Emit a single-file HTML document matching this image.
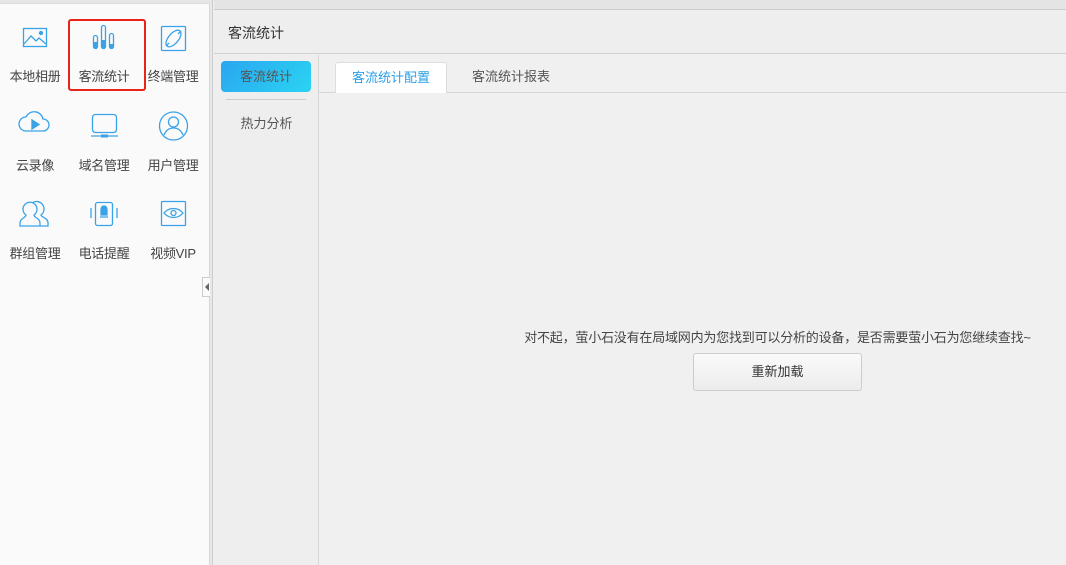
<!DOCTYPE html>
<html><head><meta charset="utf-8"><style>
*{margin:0;padding:0;box-sizing:border-box}
body{width:1066px;height:565px;overflow:hidden;background:#f0f0f0;font-family:"Liberation Sans","Noto Sans CJK SC",sans-serif;font-size:13px;color:#333;position:relative}
.abs{position:absolute}
.left{left:0;top:0;width:210px;height:565px;background:#fafafa;border-right:1px solid #d8d8d8}
.lbl{position:absolute;width:70px;text-align:center;color:#444;letter-spacing:-0.3px}
</style></head><body>
<div class="abs left"></div>
<div class="abs" style="left:0;top:0;width:210px;height:4px;background:#e6e6e6;border-bottom:1px solid #ddd"></div>
<div class="abs" style="left:210px;top:0;width:3px;height:565px;background:#e8e8e8;border-right:1px solid #ccc"></div>
<div class="abs" style="left:202px;top:277px;width:8px;height:20px;border:1px solid #ccc;border-right:none;background:#fafafa"></div>
<div class="abs" style="left:205px;top:283px;width:0;height:0;border-top:4px solid transparent;border-bottom:4px solid transparent;border-right:4px solid #666"></div>

<svg class="abs" style="left:0;top:0" width="210" height="270" fill="none" stroke="#3aa3e8" stroke-width="1.3">
<rect x="23.5" y="28.5" width="23" height="18"/><path d="M24 44l7-8 5 5 3-3 7 6"/><circle cx="41" cy="33" r="1.5" fill="#3aa3e8"/>
<rect x="93.5" y="35.5" width="4" height="13" rx="2"/><rect x="101.5" y="25.5" width="4" height="23" rx="2"/><rect x="109.5" y="33.5" width="4" height="15" rx="2"/>
<rect x="94" y="42" width="3" height="6" fill="#3aa3e8" stroke="none"/><rect x="102" y="40" width="3" height="8" fill="#3aa3e8" stroke="none"/><rect x="110" y="44" width="3" height="4" fill="#3aa3e8" stroke="none"/>
<rect x="161.5" y="26.5" width="24" height="24" rx="1"/><ellipse cx="173.5" cy="38.5" rx="10" ry="5" transform="rotate(-50 173.5 38.5)"/><path d="M166 46l3-3M178 34l3-3"/>
<path d="M26 131h17a6 6 0 0 0 0-12a9 9 0 0 0-17-2a7 7 0 0 0 0 14z"/><path d="M32 120v9l7-4.5z" fill="#3aa3e8"/>
<rect x="92.5" y="114.5" width="24" height="18" rx="3"/><path d="M91 136h27"/><rect x="101" y="134.5" width="7" height="3" fill="#3aa3e8" stroke="none"/>
<circle cx="173.5" cy="126" r="14"/><circle cx="173.5" cy="122" r="5"/><path d="M164 135c2-5 5-7 9.5-7s7.5 2 9.5 7"/>
<path d="M20 226v-3c0-5 6-5 6-8a7 7 0 1 1 8 0c0 3 6 3 6 8v3z"/><path d="M32 203a7 7 0 0 1 9 12c0 2 7 3 7 8v3h-8"/>
<rect x="95.5" y="202.5" width="17" height="23" rx="2"/><path d="M100 217h8M104 206c-3 0-3 3-3 5v4h6v-4c0-2 0-5-3-5z" fill="#3aa3e8"/><path d="M91 208v10M117 208v10"/>
<rect x="161.5" y="201.5" width="24" height="24" rx="1"/><path d="M164 213c5-6 14-6 19 0c-5 6-14 6-19 0z"/><circle cx="173.5" cy="213" r="2.5"/>
</svg>
<div class="abs" style="left:68px;top:19px;width:78px;height:72px;border:2px solid #e8231a;border-radius:3px"></div>
<div class="lbl" style="left:0;top:66px">本地相册</div>
<div class="lbl" style="left:69px;top:66px">客流统计</div>
<div class="lbl" style="left:138px;top:66px">终端管理</div>
<div class="lbl" style="left:0;top:155px">云录像</div>
<div class="lbl" style="left:69px;top:155px">域名管理</div>
<div class="lbl" style="left:138px;top:155px">用户管理</div>
<div class="lbl" style="left:0;top:243px">群组管理</div>
<div class="lbl" style="left:69px;top:243px">电话提醒</div>
<div class="lbl" style="left:138px;top:243px">视频VIP</div>

<div class="abs" style="left:214px;top:0;width:852px;height:10px;background:#e4e4e4;border-bottom:1px solid #ccc"></div>
<div class="abs" style="left:214px;top:10px;width:852px;height:44px;background:#eeeeee;border-bottom:1px solid #d0d0d0"></div>
<div class="abs" style="left:228px;top:23px;font-size:14px;color:#333">客流统计</div>
<div class="abs" style="left:214px;top:55px;width:105px;height:510px;background:#eeeeee;border-right:1px solid #d6d6d6"></div>
<div class="abs" style="left:221px;top:61px;width:90px;height:31px;border-radius:4px;background:linear-gradient(135deg,#2aa6f0,#2ad4f2);color:#555;text-align:center;line-height:31px">客流统计</div>
<div class="abs" style="left:226px;top:99px;width:80px;height:1px;background:#ccc"></div>
<div class="abs" style="left:214px;top:113px;width:105px;text-align:center;color:#555">热力分析</div>
<div class="abs" style="left:319px;top:92px;width:747px;height:1px;background:#d6d6d6"></div>
<div class="abs" style="left:335px;top:62px;width:112px;height:31px;background:#fff;border:1px solid #ddd;border-bottom:none;border-radius:3px 3px 0 0;color:#2aa0e8;text-align:center;line-height:29px">客流统计配置</div>
<div class="abs" style="left:455px;top:62px;width:112px;line-height:29px;text-align:center;color:#555">客流统计报表</div>
<div class="abs" style="left:520px;top:327px;width:515px;text-align:center;color:#444;white-space:nowrap;letter-spacing:-0.2px">对不起，萤小石没有在局域网内为您找到可以分析的设备，是否需要萤小石为您继续查找~</div>
<div class="abs" style="left:693px;top:353px;width:169px;height:38px;border:1px solid #ccc;border-radius:3px;background:linear-gradient(#fafafa,#ececec);text-align:center;line-height:36px;color:#333">重新加载</div>
</body></html>
